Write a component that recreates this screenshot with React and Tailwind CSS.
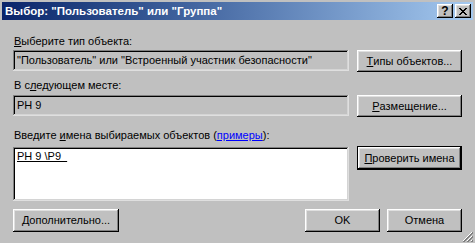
const raised =
  "shadow-[inset_-1px_-1px_#000000,inset_1px_1px_#ffffff,inset_-2px_-2px_#808080,inset_2px_2px_#dfdfdf]";
const sunken =
  "shadow-[inset_-1px_-1px_#dfdfdf,inset_1px_1px_#808080,inset_-2px_-2px_#d4d4d4,inset_2px_2px_#000000]";

function Key({ children }) {
  return <span className="underline underline-offset-[1px]">{children}</span>;
}

function Button({ className = "", children, isDefault }) {
  if (isDefault) {
    return (
      <div className={`border border-black ${className}`}>
        <div className={`flex h-full w-full items-center justify-center bg-[#c0c0c0] ${raised}`}>
          {children}
        </div>
      </div>
    );
  }
  return (
    <div className={`flex items-center justify-center bg-[#c0c0c0] ${raised} ${className}`}>
      {children}
    </div>
  );
}

function CaptionButton({ children }) {
  return (
    <div className={`flex h-[14px] w-[16px] items-center justify-center bg-[#c0c0c0] text-black ${raised}`}>
      {children}
    </div>
  );
}

export default function App() {
  return (
    <div
      className="relative h-[243px] w-[475px] overflow-hidden bg-[#c0c0c0] px-[2px] pt-[2px] text-[11px] leading-[13px] text-black"
      style={{ fontFamily: '"Liberation Sans", Arial, sans-serif' }}
    >
      {/* title bar */}
      <div className="flex h-[18px] items-center justify-between bg-gradient-to-r from-[#0a246a] to-[#a6caf0] pl-[3px] pr-[2px]">
        <span className="text-[11.5px] font-bold text-white">Выбор: "Пользователь" или "Группа"</span>
        <div className="flex gap-[2px]">
          <CaptionButton>
            <span className="text-[12px] font-bold leading-none">?</span>
          </CaptionButton>
          <CaptionButton>
            <svg width="8" height="7" viewBox="0 0 8 7">
              <path d="M0 0h2v1h1v1h2V1h1V0h2v1H7v1H6v1H5v1h1v1h1v1h1v1H6V6H5V5H3v1H2v1H0V6h1V5h1V4h1V3H2V2H1V1H0z" fill="black" />
            </svg>
          </CaptionButton>
        </div>
      </div>

      <div className="px-[11px]">
        <div className="mt-[15px] h-[13px] pl-[1px]">
          <Key>В</Key>ыберите тип объекта:
        </div>
        <div className="mt-[2px] flex gap-[8px]">
          <div className={`flex h-[21px] w-[336px] items-center pl-[4px] ${sunken}`}>
            "Пользователь" или "Встроенный участник безопасности"
          </div>
          <Button className="h-[22px] w-[105px]">
            <Key>Т</Key>ипы объектов...
          </Button>
        </div>

        <div className="mt-[7px] h-[13px] pl-[1px]">
          В с<Key>л</Key>едующем месте:
        </div>
        <div className="mt-[3px] flex gap-[8px]">
          <div className={`flex h-[21px] w-[336px] items-center pl-[4px] ${sunken}`}>PH 9</div>
          <Button className="h-[22px] w-[105px]">
            <Key>Р</Key>азмещение...
          </Button>
        </div>

        <div className="mt-[12px] h-[13px] pl-[1px]">
          Введите <Key>и</Key>мена выбираемых объектов (
          <span className="text-[#0000ff] underline underline-offset-[1px]">примеры</span>):
        </div>
        <div className="mt-[4px] flex gap-[8px]">
          <div className={`mt-[1px] h-[54px] w-[336px] bg-white pl-[4px] pt-[3px] ${sunken}`}>
            <span className="whitespace-pre underline underline-offset-[1px]">PH 9 \P9  </span>
          </div>
          <Button isDefault className="h-[24px] w-[105px]">
            <Key>П</Key>роверить имена
          </Button>
        </div>

        <div className="mt-[8px] flex">
          <Button className="h-[23px] w-[106px]">
            <Key>Д</Key>ополнительно...
          </Button>
          <div className="flex-1" />
          <div className="flex gap-[7px]">
            <Button className="h-[23px] w-[75px]">OK</Button>
            <Button className="h-[23px] w-[75px]">Отмена</Button>
          </div>
        </div>
      </div>

      {/* size grip */}
      <svg className="absolute bottom-[1px] right-[2px]" width="11" height="11" viewBox="0 0 11 11">
        <path d="M10 1L1 10M10 5L5 10M10 9L9 10" stroke="#ffffff" strokeWidth="1" />
        <path d="M11 1L1 11M11 2L2 11M11 5L5 11M11 6L6 11M11 9L9 11M11 10L10 11" stroke="#808080" strokeWidth="1" />
      </svg>
    </div>
  );
}
